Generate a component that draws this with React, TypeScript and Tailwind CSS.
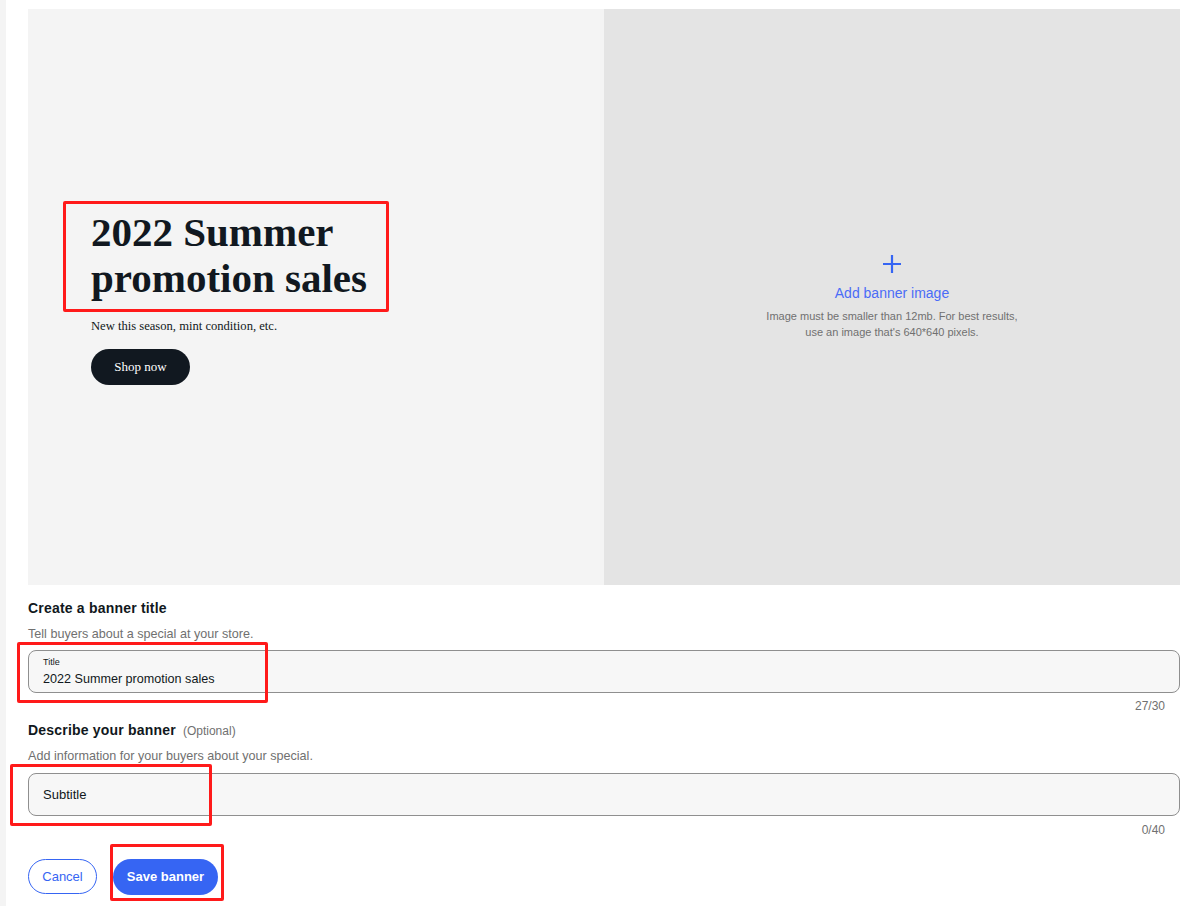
import React from "react";

const sans = { fontFamily: '"Liberation Sans", Arial, sans-serif' };
const serif = { fontFamily: '"Liberation Serif", "Times New Roman", serif' };

function RedBox({ className }: { className: string }) {
  return <div className={`pointer-events-none absolute rounded-[2px] border-[3px] border-[#ff1a1a] ${className}`} />;
}

export default function App() {
  return (
    <div className="relative flex min-h-[906px] bg-white" style={sans}>
      <div className="w-[6px] shrink-0 bg-[#f4f4f4]" />
      <div className="flex-1 pl-[22px] pr-[3px] pt-[9px]">
        <div className="grid h-[576px] grid-cols-2">
          <div className="flex flex-col justify-center bg-[#f4f4f4] pl-[63px]">
            <h1 className="text-[41px] font-bold leading-[46px] text-[#111820]" style={serif}>
              2022 Summer
              <br />
              promotion sales
            </h1>
            <p className="mt-[16px] text-[12.6px] leading-[18px] text-[#111820]" style={serif}>
              New this season, mint condition, etc.
            </p>
            <div className="mt-[14px]">
              <button
                className="h-[36px] w-[99px] rounded-full bg-[#111820] text-[13px] text-white"
                style={serif}
              >
                Shop now
              </button>
            </div>
          </div>
          <div className="flex flex-col items-center justify-center bg-[#e4e4e4]">
            <svg width="20" height="20" viewBox="0 0 20 20" className="text-[#3665f3]">
              <path d="M10 1v18M1 10h18" stroke="currentColor" strokeWidth="2.2" fill="none" />
            </svg>
            <div className="mt-[10px] text-[14px] leading-[18px] text-[#4a6cf7]">Add banner image</div>
            <div className="mt-[6px] text-center text-[11px] leading-[16px] text-[#707070]">
              Image must be smaller than 12mb. For best results,
              <br />
              use an image that's 640*640 pixels.
            </div>
          </div>
        </div>

        <div className="mt-[13px] text-[14px] font-bold leading-[20px] tracking-[0.2px] text-[#111820]">
          Create a banner title
        </div>
        <div className="mt-[8px] text-[12.6px] leading-[16px] text-[#707070]">
          Tell buyers about a special at your store.
        </div>
        <div className="mt-[8px] flex h-[43px] flex-col justify-center rounded-[8px] border border-[#8f8f8f] bg-[#f7f7f7] pl-[14px]">
          <div className="text-[9px] leading-[11px] text-[#111820]">Title</div>
          <div className="mt-[3px] text-[12.6px] leading-[16px] text-[#111820]">
            2022 Summer promotion sales
          </div>
        </div>
        <div className="mt-[5px] pr-[15px] text-right text-[12px] leading-[16px] text-[#707070]">27/30</div>

        <div className="mt-[6px] flex items-baseline gap-[7px]">
          <span className="text-[14px] font-bold leading-[20px] tracking-[0.2px] text-[#111820]">
            Describe your banner
          </span>
          <span className="text-[12px] leading-[16px] text-[#707070]">(Optional)</span>
        </div>
        <div className="mt-[8px] text-[12.6px] leading-[16px] text-[#707070]">
          Add information for your buyers about your special.
        </div>
        <div className="mt-[9px] flex h-[43px] items-center rounded-[8px] border border-[#8f8f8f] bg-[#f7f7f7] pl-[14px]">
          <span className="text-[13px] leading-[16px] text-[#111820]">Subtitle</span>
        </div>
        <div className="mt-[6px] pr-[15px] text-right text-[12px] leading-[16px] text-[#707070]">0/40</div>

        <div className="mt-[21px] flex gap-[16px]">
          <button className="h-[35px] w-[69px] rounded-full border border-[#3665f3] bg-white text-[13px] text-[#3665f3]">
            Cancel
          </button>
          <button className="h-[36px] w-[105px] rounded-full bg-[#3665f3] text-[13px] font-bold text-white">
            Save banner
          </button>
        </div>
      </div>

      <RedBox className="left-[63px] top-[201px] h-[111px] w-[326px]" />
      <RedBox className="left-[17px] top-[642px] h-[61px] w-[251px]" />
      <RedBox className="left-[10px] top-[764px] h-[62px] w-[202px]" />
      <RedBox className="left-[110px] top-[844px] h-[57px] w-[114px]" />
    </div>
  );
}
